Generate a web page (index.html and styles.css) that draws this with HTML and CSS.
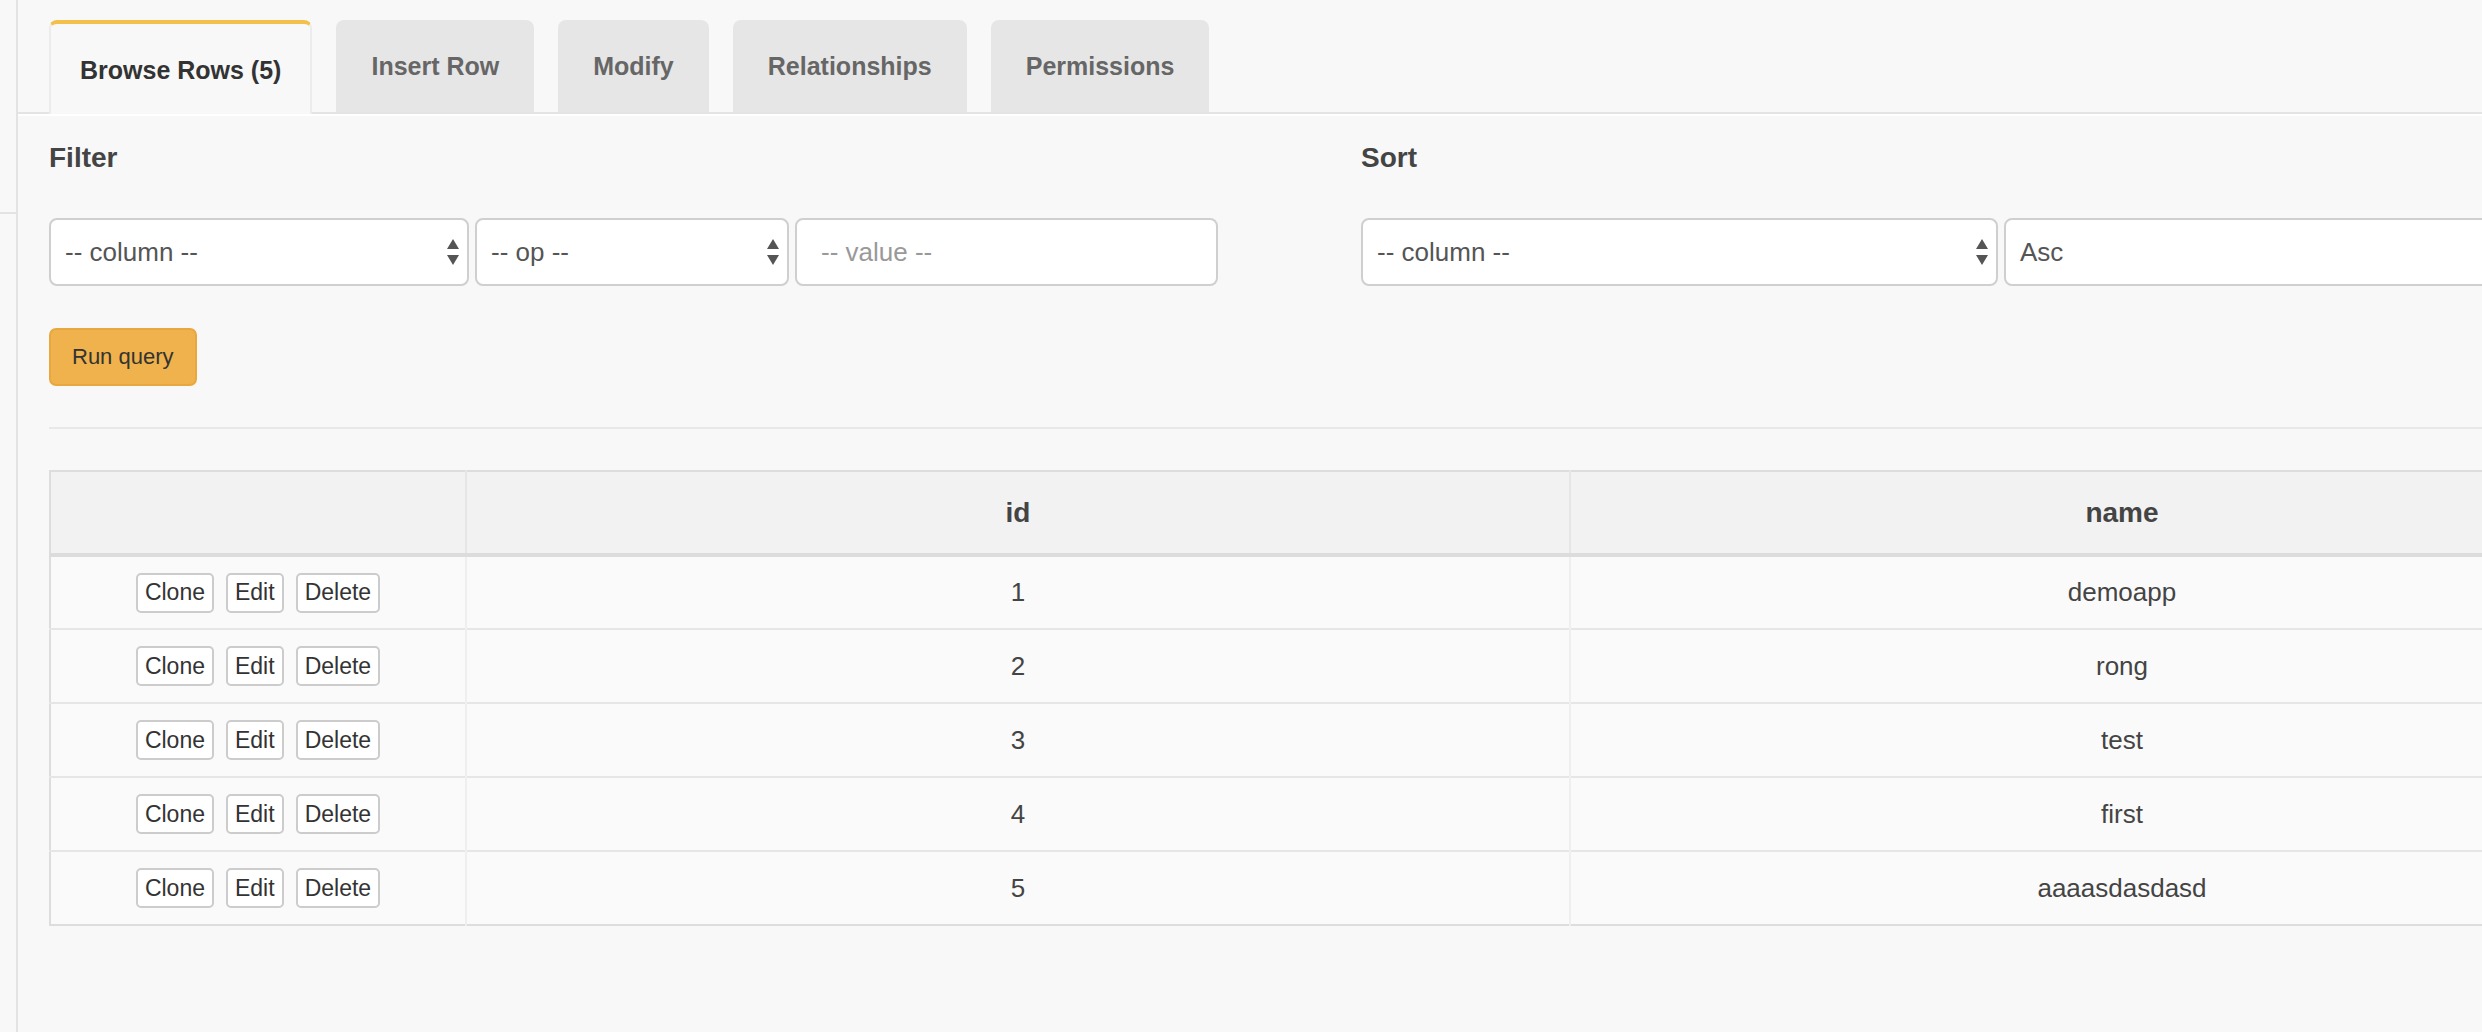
FILE: index.html
```html
<!DOCTYPE html>
<html lang="en">
<head>
<meta charset="utf-8">
<title>Browse Rows</title>
<link rel="stylesheet" href="styles.css">
</head>
<body>
<div class="page">
  <aside class="sidebar"><div class="sidebar-rule"></div></aside>
  <main class="main">
    <nav class="tabs">
      <div class="tab active">Browse Rows (5)</div>
      <div class="tab">Insert Row</div>
      <div class="tab">Modify</div>
      <div class="tab">Relationships</div>
      <div class="tab">Permissions</div>
    </nav>
    <section class="content">
      <div class="query">
        <div class="filter">
          <h4 class="label">Filter</h4>
          <div class="inputs">
            <div class="select w-col">
              <span>-- column --</span>
              <svg class="arrows" viewBox="0 0 12 26" width="12" height="26"><path d="M6 0 L12 10 L0 10 Z M0 16 L12 16 L6 26 Z" fill="#555"/></svg>
            </div>
            <div class="select w-op">
              <span>-- op --</span>
              <svg class="arrows" viewBox="0 0 12 26" width="12" height="26"><path d="M6 0 L12 10 L0 10 Z M0 16 L12 16 L6 26 Z" fill="#555"/></svg>
            </div>
            <input class="text-input w-val" type="text" placeholder="-- value --">
          </div>
          <button class="run">Run query</button>
        </div>
        <div class="sort">
          <h4 class="label">Sort</h4>
          <div class="inputs">
            <div class="select w-scol">
              <span>-- column --</span>
              <svg class="arrows" viewBox="0 0 12 26" width="12" height="26"><path d="M6 0 L12 10 L0 10 Z M0 16 L12 16 L6 26 Z" fill="#555"/></svg>
            </div>
            <div class="select w-asc">
              <span>Asc</span>
              <svg class="arrows" viewBox="0 0 12 26" width="12" height="26"><path d="M6 0 L12 10 L0 10 Z M0 16 L12 16 L6 26 Z" fill="#555"/></svg>
            </div>
          </div>
        </div>
      </div>
      <hr class="rule">
      <table class="grid">
        <colgroup>
          <col class="c-actions">
          <col class="c-id">
          <col class="c-name">
        </colgroup>
        <thead>
          <tr><th></th><th>id</th><th>name</th></tr>
        </thead>
        <tbody>
          <tr>
            <td><button class="sm">Clone</button><button class="sm">Edit</button><button class="sm">Delete</button></td>
            <td>1</td><td>demoapp</td>
          </tr>
          <tr>
            <td><button class="sm">Clone</button><button class="sm">Edit</button><button class="sm">Delete</button></td>
            <td>2</td><td>rong</td>
          </tr>
          <tr>
            <td><button class="sm">Clone</button><button class="sm">Edit</button><button class="sm">Delete</button></td>
            <td>3</td><td>test</td>
          </tr>
          <tr>
            <td><button class="sm">Clone</button><button class="sm">Edit</button><button class="sm">Delete</button></td>
            <td>4</td><td>first</td>
          </tr>
          <tr>
            <td><button class="sm">Clone</button><button class="sm">Edit</button><button class="sm">Delete</button></td>
            <td>5</td><td>aaaasdasdasd</td>
          </tr>
        </tbody>
      </table>
    </section>
  </main>
</div>
</body>
</html>
```

FILE: styles.css
```css
* { box-sizing: border-box; }
html, body { margin: 0; padding: 0; }
body {
  background: #f8f8f8;
  font-family: "Liberation Sans", Arial, sans-serif;
  color: #333;
  width: 2482px;
  height: 1032px;
  overflow: hidden;
}
.page { display: flex; min-height: 1032px; }
.sidebar {
  flex: 0 0 18px;
  border-right: 2px solid #e3e3e3;
  padding-top: 212px;
}
.sidebar-rule { height: 2px; background: #e3e3e3; }
.main { flex: 1 1 auto; min-width: 0; }

.tabs {
  display: flex;
  align-items: flex-end;
  gap: 24px;
  padding: 20px 0 0 31px;
  border-bottom: 2px solid #e4e4e4;
  box-shadow: 0 2px 0 #ffffff;
}
.tab {
  height: 92px;
  padding: 0 35px;
  display: flex;
  align-items: center;
  font-size: 25px;
  font-weight: bold;
  color: #666;
  background: #e6e6e6;
  border-radius: 8px 8px 0 0;
  white-space: nowrap;
}
.tab.active {
  height: 94px;
  margin-bottom: -2px;
  padding: 2px 29px 0 29px;
  color: #333;
  background: #f8f8f8;
  border-top: 4px solid #f3c04a;
  border-left: 2px solid #ececec;
  border-right: 2px solid #ececec;
  position: relative;
  z-index: 1;
}

.content { padding: 0 0 0 31px; }
.query { display: flex; }
.filter, .sort { flex: 0 0 1312px; }
.label {
  margin: 24px 0 0 0;
  height: 40px;
  line-height: 40px;
  font-size: 28px;
  font-weight: bold;
  color: #444;
}
.inputs { display: flex; gap: 6px; margin-top: 40px; }
.select, .text-input {
  height: 68px;
  background: #fff;
  border: 2px solid #cfcfcf;
  border-radius: 8px;
  font-family: "Liberation Sans", Arial, sans-serif;
  font-size: 26px;
  color: #555;
}
.select {
  display: flex;
  align-items: center;
  justify-content: space-between;
  padding: 0 8px 0 14px;
  flex: 0 0 auto;
}
.arrows { display: block; }
.w-col { width: 420px; }
.w-op { width: 314px; }
.w-val { width: 423px; }
.w-scol { width: 637px; }
.w-asc { width: 640px; }
.text-input { padding: 0 24px; outline: none; }
.text-input::placeholder { color: #999; }

.run {
  margin-top: 42px;
  height: 58px;
  padding: 0 21px;
  background: #efb24c;
  border: 2px solid #e8a83e;
  border-radius: 7px;
  font-family: "Liberation Sans", Arial, sans-serif;
  font-size: 22px;
  color: #333;
  display: block;
}

.rule {
  margin: 41px 0 0 0;
  border: 0;
  height: 2px;
  background: #e8e8e8;
  width: 2624px;
}

.grid {
  margin-top: 41px;
  width: 2624px;
  table-layout: fixed;
  border-collapse: collapse;
  border: 2px solid #dddddd;
}
.c-actions { width: 416px; }
.c-id { width: 1104px; }
.c-name { width: 1104px; }
.grid th {
  height: 84px;
  background: #f2f2f2;
  border-bottom: 4px solid #dcdcdc;
  border-right: 2px solid #e6e6e6;
  font-size: 28px;
  font-weight: bold;
  color: #444;
  text-align: center;
}
.grid td {
  height: 74px;
  background: #fafafa;
  border-top: 2px solid #e6e6e6;
  border-right: 2px solid #efefef;
  text-align: center;
  font-size: 26px;
  color: #444;
}
.sm {
  height: 40px;
  margin: 0 6px;
  padding: 0 7px;
  background: #fff;
  border: 2px solid #cccccc;
  border-radius: 5px;
  font-family: "Liberation Sans", Arial, sans-serif;
  font-size: 23px;
  color: #333;
  vertical-align: middle;
}
```
